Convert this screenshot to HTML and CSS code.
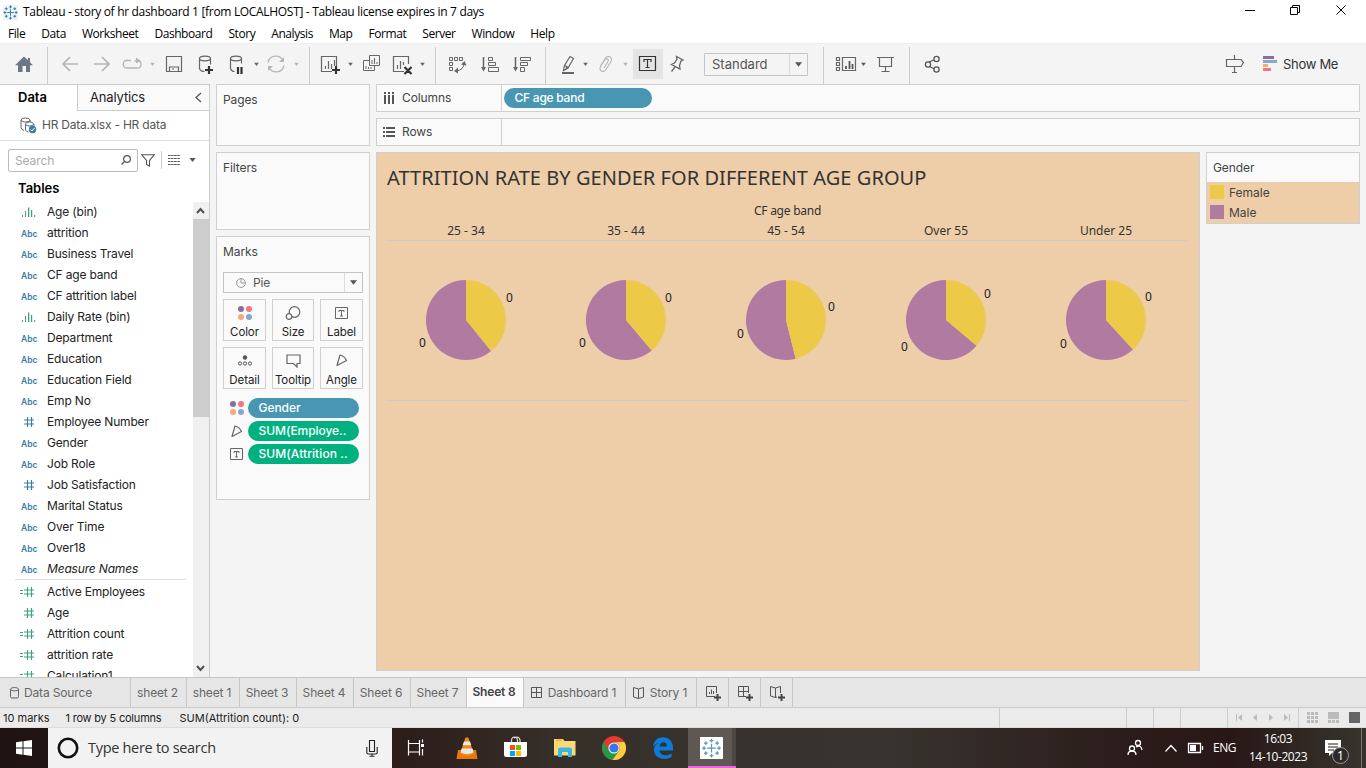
FILE: index.html
```html
<!DOCTYPE html>
<html lang="en">
<head>
<meta charset="utf-8">
<title>Tableau - story of hr dashboard 1</title>
<link rel="stylesheet" href="styles.css">
</head>
<body>
<svg class="defs" width="0" height="0" aria-hidden="true">
  <defs>
    <symbol id="abc" viewBox="0 0 20 14"><text x="1" y="11" class="abc-text">Abc</text></symbol>
    <symbol id="hash" viewBox="0 0 20 14"><path d="M7.5 2v10M11.5 2v10M4 5h10M4 9h10" fill="none" stroke="currentColor" stroke-width="1.2"/></symbol>
    <symbol id="calc" viewBox="0 0 20 14"><path d="M7.5 2v10M11.5 2v10M4 5h10M4 9h10M0 5.5h3M0 8.5h3" fill="none" stroke="currentColor" stroke-width="1.1"/></symbol>
    <symbol id="bin" viewBox="0 0 20 14"><path d="M2 10h1v2H2zM5 6h1v6H5zM8 2.500h1.300v9.500H8zM11 5h1.200v7H11zM14.200 10h1v2h-1z" fill="currentColor"/></symbol>
    <symbol id="dots" viewBox="0 0 14 14"><circle cx="3" cy="3" r="3" fill="#8a6f9b"/><circle cx="11" cy="3" r="3" fill="#f77381"/><circle cx="3" cy="11" r="3" fill="#f5a97f"/><circle cx="11" cy="11" r="3" fill="#86a7cf"/></symbol>
    <symbol id="tbox" viewBox="0 0 14 12"><path d="M.5.5h12v11H.5zM4 5V3.500h5V5M6.500 3.500v5.500M5 9h3" fill="none" stroke="#666"/></symbol>
    <symbol id="angle" viewBox="0 0 12 12"><path d="M4 1L1 11.500L10.500 6.500Q8.500 2 4 1z" fill="none" stroke="#666" stroke-width="1.200" stroke-linejoin="round"/></symbol>
    <symbol id="caret" viewBox="0 0 6 4"><path d="M0 0h6L3 4z" fill="currentColor"/></symbol>
    <symbol id="spark" viewBox="0 0 16 16"><path d="M8 4.500v7M4.500 8h7M8 .5v3M6.500 2h3M8 12.500v3M6.500 14h3M.5 8h3M2 6.500v3M12.500 8h3M14 6.500v3M3.500 2.500v3M2 4h3M12.500 2.500v3M11 4h3M3.500 10.500v3M2 12h3M12.500 10.500v3M11 12h3" fill="none" stroke="currentColor"/></symbol>
  </defs>
</svg>

<header class="titlebar">
  <svg class="app-icon" width="15" height="15"><rect width="15" height="15" fill="#eef2f6"/><use href="#spark" width="15" height="15"/></svg>
  <span class="title-text">Tableau - story of hr dashboard 1 [from LOCALHOST] - Tableau license expires in 7 days</span>
  <svg class="window-controls" width="110" height="20" viewBox="1240 0 110 20"><path d="M1245 10.500h10M1290.500 7.500h7v7h-7zM1292.500 7V5.500h7v7H1298M1336.500 5.500l9 9M1345.500 5.500l-9 9" fill="none" stroke="#000"/></svg>
</header>

<nav class="menu">
  <span>File</span><span>Data</span><span>Worksheet</span><span>Dashboard</span><span>Story</span><span>Analysis</span><span>Map</span><span>Format</span><span>Server</span><span>Window</span><span>Help</span>
</nav>

<div class="toolbar">
  <svg class="tools" width="47" height="41" viewBox="0 43 47 41"><path d="M24 56.500l4 3.800V58h2v4.200l3 3h-3V72h-4v-6h-3.500v6H18v-6.800h-3z" fill="#6b7785"/></svg>
  <svg class="tools group" width="262" height="41" viewBox="47 43 262 41">
    <g fill="none" stroke="#b5b5b5" stroke-width="1.700">
      <path d="M78 64H63M70 57l-7 7 7 7M94 64h15M102 57l7 7-7 7"/>
      <path d="M131 60.500h-4.500a3 3.500 0 0 0 0 7.500h11a3 3.500 0 0 0 1-7h-4" stroke-width="1.300"/>
      <path d="M268 62.500a8 8 0 0 1 15-2M284 65.500a8 8 0 0 1-15 2" stroke-width="1.300"/>
    </g>
    <path d="M136 57.500l4.500 3-4.500 3zM284 57v5h-5zM268 71v-5h5z" fill="#b5b5b5"/>
    <g fill="none" stroke="#666" stroke-width="1.200">
      <path d="M166.500 56.500h15v15h-15zM169.500 71v-4h9v4M172 69h2"/>
      <path d="M199.500 58.500v10q1 3 5 3M210.500 58.500v6"/><ellipse cx="205" cy="58.500" rx="5.500" ry="2.300"/>
      <path d="M230.500 58.500v10q1 3 4 3M241.500 58.500v5"/><ellipse cx="236" cy="58.500" rx="5.500" ry="2.300"/>
    </g>
    <path d="M209 66v8M205 70h8M238 67v7M241.500 67v7" stroke="#333" stroke-width="2.200"/>
    <use href="#caret" x="150" y="62.500" width="5" height="3.500" color="#b5b5b5"/><use href="#caret" x="254" y="62.500" width="5" height="3.500" color="#666"/><use href="#caret" x="294" y="62.500" width="5" height="3.500" color="#b5b5b5"/>
  </svg>
  <svg class="tools group" width="126" height="41" viewBox="309 43 126 41">
    <g fill="none" stroke="#666" stroke-width="1.200">
      <path d="M332 71.500h-10.500v-15h15V66M325.500 69v-3M328.500 69v-8M331.500 69v-5M334.500 66v-6"/>
      <path d="M369.500 55.500h10v10h-10zM369 60.500h-5.500v10h11V66M372 64v-4M374.500 64v-6M377 64v-2M366 69v-3M368.500 69v-2M371 69v-2" stroke-width="1"/>
      <path d="M404 71.500h-10.500v-15h15V64M397.500 69v-4M400.500 69v-8M403.500 65v-3"/>
    </g>
    <path d="M336 66v8M332 70h8M404.500 67l7 7M411.500 67l-7 7" stroke="#333" stroke-width="2.200"/>
    <use href="#caret" x="348" y="62.500" width="5" height="3.500" color="#666"/><use href="#caret" x="420" y="62.500" width="5" height="3.500" color="#666"/>
  </svg>
  <svg class="tools group" width="110" height="41" viewBox="435 43 110 41">
    <g fill="none" stroke="#666" stroke-width="1">
      <path d="M449.500 57.500h3v3h-3zM454.500 57.500h3v3h-3zM459.500 57.500h3v3h-3zM449.500 62.500h3v3h-3zM449.500 67.500h3v3h-3zM464 63q0 7-8 8"/>
      <path d="M488.500 57.500h4v3h-4zM488.500 62.500h7v3h-7zM488.500 67.500h10v4h-10z"/>
      <path d="M520.500 57.500h10v3h-10zM520.500 62.500h7v3h-7zM520.500 67.500h4v4h-4z"/>
      <path d="M483.500 57v11M515.500 57v11" stroke-width="1.500"/>
    </g>
    <path d="M461 64.500l3.500-3.500 2 4.500zM458 67.500v6l-4-2.500zM481 67h5l-2.500 4.500zM513 67h5l-2.500 4.500z" fill="#666"/>
  </svg>
  <svg class="tools group" width="151" height="41" viewBox="545 43 151 41">
    <path d="M562 73h12" stroke="#666" stroke-width="2"/>
    <path d="M563.500 70.500l1-5 5.500-9 3.500 2-5.500 9.500-4.500 2.500zM564.500 65.500l4 2M566 69l1-3" fill="none" stroke="#666" stroke-width="1.200"/>
    <path d="M600.500 66l5-8q2-2.500 4.500-1t1 4.500l-5 8q-2 3-4.500 1.500t-1-4.500l4.500-7q1-1.500 2.500-.5t.5 2.500l-4 6.500" fill="none" stroke="#b5b5b5" stroke-width="1.100"/>
    <rect x="633" y="49" width="30" height="30" fill="#e4e4e4"/>
    <path d="M639.500 56.500h16v14h-16zM644 62v-2.500h7V62M647.500 59.500v8M645.500 67.500h4" fill="none" stroke="#333" stroke-width="1.200"/>
    <path d="M676.500 56.500l6.500 3.500-2 1-1.500 4.500.5 3.500-8.500-4.500 3-1.500 2.500-4zM675 67l-3.500 4.500" fill="none" stroke="#666" stroke-width="1.300"/>
    <use href="#caret" x="583" y="62.500" width="5" height="3.500" color="#666"/><use href="#caret" x="623" y="62.500" width="5" height="3.500" color="#b5b5b5"/>
  </svg>
  <div class="fit-select"><span>Standard</span><i><svg width="7" height="5"><use href="#caret" width="7" height="5"/></svg></i></div>
  <svg class="tools group after-select" width="86" height="41" viewBox="823 43 86 41">
    <g fill="none" stroke="#666" stroke-width="1.200"><path d="M836.500 57.500h3v3h-3zM836.500 62.500h3v3h-3zM836.500 67.500h3v3h-3zM842.500 57.500h13v13h-13zM877 57.500h17M879.500 58v8.500h12V58M885.500 66.500v5M881.500 71.500h8"/></g>
    <path d="M846 69v-3M849.500 69v-8M852.500 69v-5" stroke="#555" stroke-width="1.800"/>
    <use href="#caret" x="861" y="62.500" width="5" height="3.500" color="#555"/>
  </svg>
  <svg class="tools group" width="60" height="41" viewBox="909 43 60 41"><path d="M927 63l9-4M927 65.500l9 4" stroke="#555" stroke-width="1.200"/><g fill="#f4f4f4" stroke="#555" stroke-width="1.300"><circle cx="928" cy="64.500" r="2.600"/><circle cx="936.500" cy="59" r="2.600"/><circle cx="936.500" cy="69.500" r="2.600"/></g></svg>
  <svg class="tools guide" width="56" height="41" viewBox="1224 43 56 41"><path d="M1226.500 59.500h14.500l2.500 3-2.500 4h-14.500zM1234.500 55v4M1234.500 66.500v5.500M1232 72.500h5" fill="none" stroke="#666" stroke-width="1.200"/><path d="M1263 56h11v3h-11z" fill="#8a6f9b"/><path d="M1263 60h14v3h-14z" fill="#86a7cf"/><path d="M1263 64h5v3h-5z" fill="#f5a97f"/><path d="M1263 68h8v3h-8z" fill="#f77381"/></svg>
  <span class="show-me">Show Me</span>
</div>

<main class="workspace">
  <aside class="data-pane">
    <div class="pane-tabs"><b>Data</b><span>Analytics</span><svg width="7" height="11"><path d="M6 1L1 5.500L6 10" fill="none" stroke="#555" stroke-width="1.300"/></svg></div>
    <div class="source">
      <svg width="17" height="17" viewBox="0 0 17 17"><g fill="none" stroke="#666"><path d="M1 3v8q1 2 3 2.500"/><ellipse cx="5.500" cy="3" rx="4.500" ry="2"/><path d="M10 3v2M5.500 7v6q1 2 3 2M14 7v3"/><ellipse cx="9.500" cy="7" rx="4" ry="2"/></g><circle cx="12.500" cy="12.500" r="3.700" fill="#3b7ea1"/><path d="M10.500 12.500l1.500 1.500 2.500-3" fill="none" stroke="#fff"/></svg>
      <span>HR Data.xlsx - HR data</span>
    </div>
    <div class="finder">
      <div class="search"><span>Search</span><svg width="10" height="10"><circle cx="6" cy="4" r="3.400" fill="none" stroke="#555" stroke-width="1.200"/><path d="M3.500 6.500L.5 9.500" stroke="#555" stroke-width="1.300"/></svg></div>
      <svg class="filter" width="14" height="13"><path d="M.8.8h12.400L8.500 6.500V12l-3-1.500v-4z" fill="none" stroke="#555" stroke-width="1.100"/></svg>
      <svg class="view" width="12" height="10"><path d="M0 .5h12M0 3.500h12M0 6.500h12M0 9.500h12" stroke="#555" stroke-dasharray="2.500 .6"/></svg>
      <svg class="view-caret" width="7" height="4"><use href="#caret" width="7" height="4"/></svg>
    </div>
    <h2 class="tables-title">Tables</h2>
    <div class="field-area">
      <ul class="fields">
        <li class="mea"><svg><use href="#bin"/></svg>Age (bin)</li>
        <li><svg><use href="#abc"/></svg>attrition</li>
        <li><svg><use href="#abc"/></svg>Business Travel</li>
        <li><svg><use href="#abc"/></svg>CF age band</li>
        <li><svg><use href="#abc"/></svg>CF attrition label</li>
        <li class="mea"><svg><use href="#bin"/></svg>Daily Rate (bin)</li>
        <li><svg><use href="#abc"/></svg>Department</li>
        <li><svg><use href="#abc"/></svg>Education</li>
        <li><svg><use href="#abc"/></svg>Education Field</li>
        <li><svg><use href="#abc"/></svg>Emp No</li>
        <li><svg><use href="#hash"/></svg>Employee Number</li>
        <li><svg><use href="#abc"/></svg>Gender</li>
        <li><svg><use href="#abc"/></svg>Job Role</li>
        <li><svg><use href="#hash"/></svg>Job Satisfaction</li>
        <li><svg><use href="#abc"/></svg>Marital Status</li>
        <li><svg><use href="#abc"/></svg>Over Time</li>
        <li><svg><use href="#abc"/></svg>Over18</li>
        <li><svg><use href="#abc"/></svg><em>Measure Names</em></li>
        <li class="rule"></li>
        <li class="mea"><svg><use href="#calc"/></svg>Active Employees</li>
        <li class="mea"><svg><use href="#hash"/></svg>Age</li>
        <li class="mea"><svg><use href="#calc"/></svg>Attrition count</li>
        <li class="mea"><svg><use href="#calc"/></svg>attrition rate</li>
        <li class="mea"><svg><use href="#calc"/></svg>Calculation1</li>
      </ul>
      <div class="scrollbar">
        <svg width="15" height="17"><path d="M4 11l3.500-4L11 11" fill="none" stroke="#505050" stroke-width="2"/></svg>
        <div class="thumb"></div>
        <svg class="down" width="15" height="17"><path d="M4 6l3.500 4L11 6" fill="none" stroke="#505050" stroke-width="2"/></svg>
      </div>
    </div>
  </aside>

  <section class="cards">
    <div class="card pages">Pages</div>
    <div class="card filters">Filters</div>
    <div class="card marks">
      <div class="marks-title">Marks</div>
      <div class="mark-type"><svg width="10" height="10"><path d="M5 .6A4.400 4.400 0 1 0 9.400 5A4.400 4.400 0 0 0 5 .6V5H9" fill="none" stroke="#999"/></svg><span>Pie</span><i><svg width="7" height="5"><use href="#caret" width="7" height="5"/></svg></i></div>
      <div class="mark-grid">
        <div><svg width="14" height="14"><use href="#dots"/></svg>Color</div>
        <div><svg width="16" height="14"><circle cx="9.500" cy="6" r="5.300" fill="none" stroke="#666" stroke-width="1.200"/><circle cx="4" cy="10.500" r="2.800" fill="#fafafa" stroke="#666" stroke-width="1.200"/></svg>Size</div>
        <div><svg class="low" width="14" height="12"><use href="#tbox"/></svg>Label</div>
        <div><svg class="low" width="16" height="12"><circle cx="8" cy="2.500" r="2.200" fill="#555"/><g fill="none" stroke="#555"><circle cx="3" cy="8.500" r="1.600"/><circle cx="8" cy="8.500" r="1.600"/><circle cx="13" cy="8.500" r="1.600"/></g></svg>Detail</div>
        <div><svg width="15" height="14"><path d="M1 1h13v8.500h-3V13L7.500 9.500H1z" fill="none" stroke="#666" stroke-width="1.200"/></svg>Tooltip</div>
        <div><svg width="12" height="12"><use href="#angle"/></svg>Angle</div>
      </div>
      <div class="pills">
        <div><svg width="14" height="14"><use href="#dots"/></svg><span class="pill blue">Gender</span></div>
        <div><svg width="14" height="12"><use href="#angle"/></svg><span class="pill green">SUM(Employe..</span></div>
        <div><svg width="14" height="12"><use href="#tbox"/></svg><span class="pill green wide">SUM(Attrition ..</span></div>
      </div>
    </div>
  </section>

  <section class="view-area">
    <div class="shelf"><div class="shelf-name"><svg width="12" height="12"><path d="M2 0v2M6 0v2M10 0v2M2 3v9M6 3v9M10 3v9" stroke="#555" stroke-width="2"/></svg>Columns</div><span class="pill blue">CF age band</span></div>
    <div class="shelf"><div class="shelf-name"><svg width="12" height="12"><path d="M0 2h2M0 6h2M0 10h2M3 2h9M3 6h9M3 10h9" stroke="#555" stroke-width="2"/></svg>Rows</div></div>
    <div class="view-row">
      <div class="sheet">
        <h1>ATTRITION RATE BY GENDER FOR DIFFERENT AGE GROUP</h1>
        <div class="axis-title">CF age band</div>
        <div class="headers"><span>25 - 34</span><span>35 - 44</span><span>45 - 54</span><span>Over 55</span><span>Under 25</span></div>
        <svg class="pies" width="801" height="159" viewBox="387 241 801 159">
          <g fill="#b07aa1"><path d="M466 280A40 40 0 1 0 491.100 351.100L466 320z"/><path d="M626 280A40 40 0 1 0 651.700 350.600L626 320z"/><path d="M786 280A40 40 0 1 0 795.700 358.800L786 320z"/><path d="M946 280A40 40 0 1 0 976.600 345.700L946 320z"/><path d="M1106 280A40 40 0 1 0 1133 349.500L1106 320z"/></g>
          <g fill="#edc948"><path d="M466 320V280A40 40 0 0 1 491.100 351.100z"/><path d="M626 320V280A40 40 0 0 1 651.700 350.600z"/><path d="M786 320V280A40 40 0 0 1 795.700 358.800z"/><path d="M946 320V280A40 40 0 0 1 976.600 345.700z"/><path d="M1106 320V280A40 40 0 0 1 1133 349.500z"/></g>
          <g class="mark-labels"><text x="509.500" y="302">0</text><text x="422.500" y="347">0</text><text x="668.500" y="302">0</text><text x="582.500" y="347">0</text><text x="831.500" y="311">0</text><text x="740.500" y="338">0</text><text x="987.500" y="298">0</text><text x="904.500" y="351">0</text><text x="1148.500" y="301">0</text><text x="1063.500" y="348">0</text></g>
        </svg>
      </div>
      <div class="legend">
        <div class="legend-title">Gender</div>
        <div class="legend-items"><div><i class="female"></i>Female</div><div><i class="male"></i>Male</div></div>
      </div>
    </div>
  </section>
</main>

<div class="sheet-tabs">
  <div class="tab t-source"><svg width="9" height="12"><path d="M.5 2v7.500q0 1.500 1.500 1.500h5q1.500 0 1.500-1.500V2" fill="none" stroke="#666"/><ellipse cx="4.500" cy="2.200" rx="4" ry="1.700" fill="none" stroke="#666"/></svg><span>Data Source</span></div>
  <div class="tab t-2">sheet 2</div><div class="tab t-1">sheet 1</div><div class="tab t-3">Sheet 3</div><div class="tab t-4">Sheet 4</div><div class="tab t-4">Sheet 6</div><div class="tab t-7">Sheet 7</div><div class="tab t-4 active">Sheet 8</div>
  <div class="tab t-dash"><svg width="12" height="11"><path d="M.5.5h10v10H.5zM5.500.5v10M.5 5.500h10" fill="none" stroke="#555"/></svg><span>Dashboard 1</span></div>
  <div class="tab t-story"><svg width="12" height="12"><path d="M.5.500L5.500 2l5-1.500V10l-5 1.500L.5 10zM5.500 2v9.500" fill="none" stroke="#555"/></svg><span>Story 1</span></div>
  <div class="tab t-new"><svg width="16" height="15"><path d="M9 10.500H.5V.5h10V7M3.500 8V6M5.500 8V3.500M7.500 8V5" fill="none" stroke="#555"/><path d="M11.500 8v7M8 11.500h7" stroke="#444" stroke-width="2"/></svg></div>
  <div class="tab t-new"><svg width="16" height="15"><path d="M8 10.500H.5V.5h10V7M5.500.5v10M.5 5.500h10" fill="none" stroke="#555"/><path d="M11.500 8v7M8 11.500h7" stroke="#444" stroke-width="2"/></svg></div>
  <div class="tab t-new"><svg width="16" height="15"><path d="M7 11L5.500 11.500.5 10V.500L5.500 2l5-1.500V7M5.500 2v9.500" fill="none" stroke="#555"/><path d="M11.500 8v7M8 11.500h7" stroke="#444" stroke-width="2"/></svg></div>
</div>

<div class="status">
  <span class="s1">10 marks</span><span class="s2">1 row by 5 columns</span><span class="s3">SUM(Attrition count): 0</span>
  <svg class="status-tools" width="367" height="20" viewBox="999 708 367 20">
    <path d="M999.500 708v20M1126.500 708v20M1153.500 708v20M1180.500 708v20M1227.500 708v20M1298.500 708v20" stroke="#ccc"/>
    <g fill="#bbb"><path d="M1236 714h1v7h-1zM1242 714v7l-4-3.500zM1257 714v7l-4-3.500zM1269 714v7l4-3.500zM1284 714v7l4-3.500zM1289 714h1v7h-1z"/><path d="M1307 712h3v3h-3zM1311 712h3v3h-3zM1315 712h3v3h-3zM1307 716h3v3h-3zM1311 716h3v3h-3zM1315 716h3v3h-3zM1307 720h3v3h-3zM1311 720h3v3h-3zM1315 720h3v3h-3zM1328 712h11v7h-11zM1328 720h3v3h-3zM1332 720h3v3h-3zM1336 720h3v3h-3z"/></g>
    <path d="M1349 712h11v11h-11z" fill="#666"/>
  </svg>
</div>

<footer class="taskbar">
  <div class="start"><svg width="16" height="16"><path d="M0 2.200L6.500 1.300V7.500H0zM7.500 1.200L16 0V7.500H7.500zM0 8.500H6.500V14.700L0 13.800zM7.500 8.500H16V16L7.500 14.800z" fill="#fff"/></svg></div>
  <div class="task-search"><svg width="22" height="22"><circle cx="11" cy="11" r="9.200" fill="none" stroke="#111" stroke-width="2.600"/></svg><span>Type here to search</span><svg class="mic" width="12" height="17"><path d="M3.500.5h5v11h-5zM.8 7v5.500q0 1.500 1.500 1.500h7.400q1.500 0 1.500-1.500V7M6 14v2.500M3.500 16.300h5" fill="none" stroke="#222" stroke-width="1.100"/></svg></div>
  <svg class="apps" width="344" height="40" viewBox="392 728 344 40">
    <path d="M408.500 740v3.500M419.500 740v3.500M408.500 743.500h11v8.500h-11zM408.500 755.500v-3.500M419.500 755.500v-3.500M422.500 739.500v3M422.500 749v6.500" fill="none" stroke="#fff" stroke-width="1.200"/><path d="M421 744h3v3h-3z" fill="#fff"/>
    <path d="M458 750h18l1.500 9h-21z" fill="#e97708"/><path d="M465.500 737.500h2.800L474 754q-7 4-14 0z" fill="#f58713"/><path d="M464 741.500h6l1.300 3.700h-8.700zM461.600 748.500h11l1 4q-6.500 3-13 0z" fill="#e8e8e8"/>
    <path d="M504 742h23v12.500q0 2.500-2.500 2.500h-18q-2.500 0-2.500-2.500z" fill="#fff"/><path d="M511.500 742v-1q0-4 3-4t3 4v1M514 738q5-2.500 6 2v2" fill="none" stroke="#ddd" stroke-width="1.200"/><path d="M510 745h5v5h-5z" fill="#f25022"/><path d="M516 745h5v5h-5z" fill="#7fba00"/><path d="M510 751h5v5h-5z" fill="#00a4ef"/><path d="M516 751h5v5h-5z" fill="#ffb900"/>
    <path d="M554 739h9l1.500 2H575.500v14.500H554z" fill="#fbd974"/><path d="M556 740.200h6" stroke="#e8a31c"/><path d="M558 757v-7q0-2.500 2.500-2.500h9q2.500 0 2.500 2.500v7h-4v-5h-6v5z" fill="#3bb6e8"/>
    <circle cx="614" cy="748" r="12" fill="#e33b2e"/><path d="M603.600 742A12 12 0 0 0 612.500 759.900L619.200 751H609z" fill="#279847"/><path d="M624.400 742A12 12 0 0 1 612.500 759.900L619.200 751A6 6 0 0 0 614 742z" fill="#fdd037"/><circle cx="614" cy="748" r="5.600" fill="#fff"/><circle cx="614" cy="748" r="4.600" fill="#3479e8"/>
    <path d="M653 747C654 734 673 734 673 748V750.500H659.500C660 756 667 756.500 671.500 753.500V757C664 761 654 758.500 654 750C654 745.500 657 743 660 742.500Q655.500 743 653 747zM659.500 746.500H667C667 740.500 660 741.500 659.500 746.500z" fill="#0c7cda" fill-rule="evenodd"/>
    <path d="M688 728h44v38h-44z" fill="#5d5854"/><path d="M732 728h4v38h-4z" fill="#4b4642"/><path d="M688 766h48v2h-48z" fill="#ee62dc"/><path d="M700 737h23v22h-23z" fill="#fff"/><use href="#spark" x="701.500" y="738" width="20" height="20" color="#5b98ba"/>
  </svg>
  <svg class="tray" width="90" height="40" viewBox="1120 728 90 40"><g fill="none" stroke="#fff" stroke-width="1.300"><circle cx="1132" cy="748.500" r="2.500"/><path d="M1128 755q0-4 4-4t4 4"/><circle cx="1138" cy="743" r="2.500"/><path d="M1136 747q5-3 6 3M1165.500 751.500l5.500-6 5.500 6M1188.500 743.500h12v9h-12zM1202.500 746v4"/></g><path d="M1190 745h6v6h-6z" fill="#fff"/></svg>
  <span class="lang">ENG</span>
  <div class="clock"><span>16:03</span><span class="date">14-10-2023</span></div>
  <svg class="notes" width="40" height="40" viewBox="1322 728 40 40"><path d="M1325 740h16v13h-9l-3 3v-3h-4z" fill="#fff"/><path d="M1328 744h10M1328 747h10M1328 750h6" stroke="#241c1a"/><circle cx="1340.500" cy="755.500" r="8" fill="#2c2b2a" stroke="#999"/><text x="1340.500" y="760">1</text><path d="M1361.500 728v40" stroke="#77736f"/></svg>
</footer>
</body>
</html>
```
FILE: styles.css
```css
* { box-sizing: border-box; }
body { margin: 0; width: 1366px; height: 768px; overflow: hidden; display: flex; flex-direction: column; background: #f4f4f4; color: #333; font: 12px/16px Inter, "Open Sans", sans-serif; }
svg { display: block; flex: none; }
.defs { display: none; }
h1, h2, ul { margin: 0; padding: 0; list-style: none; }
span { white-space: nowrap; }

.titlebar { flex: none; height: 24px; background: #fff; display: flex; align-items: center; padding-left: 3px; color: #000; font-family: "Open Sans", sans-serif; }
.app-icon { color: #2d7aa5; }
.title-text { margin-left: 5px; font-size: 12px; letter-spacing: -.315px; }
.window-controls { margin-left: auto; margin-right: 16px; align-self: flex-start; }

.menu { flex: none; height: 19px; background: #fff; display: flex; gap: 16px; padding-left: 8px; line-height: 19px; color: #000; font-family: "Open Sans", sans-serif; letter-spacing: -.43px; }

.toolbar { flex: none; height: 41px; display: flex; align-items: center; border-top: 1px solid #eee; }
.tools { margin-top: -1px; }
.group { background: linear-gradient(#ccc, #ccc) 0 4px / 1px 37px no-repeat; }
.fit-select { margin-left: 8px; width: 104px; height: 23px; border: 1px solid #c4c4c4; border-radius: 1px; display: flex; align-items: center; justify-content: space-between; padding-left: 7px; color: #555; font-size: 13px; }
.fit-select i, .mark-type i { width: 18px; align-self: stretch; border-left: 1px solid #ddd; display: flex; align-items: center; justify-content: center; color: #555; }
.after-select { margin-left: 15px; }
.guide { margin-left: auto; }
.show-me { margin-left: 3px; width: 83px; font-size: 13px; letter-spacing: -.3px; }

.workspace { flex: none; height: 593px; display: flex; }
.data-pane { width: 210px; background: #fff; border-top: 1px solid #ccc; border-right: 1px solid #ccc; display: flex; flex-direction: column; overflow: hidden; }
.pane-tabs { flex: none; height: 26px; display: flex; font-size: 13px; line-height: 25px; color: #222; }
.pane-tabs b { width: 77px; padding-left: 18px; color: #000; font-weight: 600; }
.pane-tabs span { flex: 1; padding-left: 12px; border-left: 1px solid #ccc; border-bottom: 1px solid #ccc; background: #fafafa; letter-spacing: -.15px; }
.pane-tabs svg { margin: 7px 7px 0 -14px; }
.source { flex: none; height: 30px; border-bottom: 1px solid #ddd; display: flex; align-items: center; gap: 5px; padding-left: 20px; color: #555; letter-spacing: -.22px; }
.source span { margin-top: -2px; }
.finder { flex: none; height: 38px; display: flex; align-items: center; padding-left: 8px; color: #555; }
.search { width: 130px; height: 23px; border: 1px solid #bbb; border-radius: 2px; display: flex; align-items: center; justify-content: space-between; padding: 0 6px; color: #aaa; letter-spacing: -.1px; }
.search span { margin-top: 2px; }
.filter { margin-left: 3px; }
.view { box-sizing: content-box; margin-left: 6px; padding: 4px 0 4px 6px; border-left: 1px solid #ccc; }
.view-caret { margin-left: 9px; }
.tables-title { flex: none; height: 22px; padding-left: 18px; font-size: 13px; font-weight: 600; line-height: 19px; color: #000; }
.field-area { flex: 1; min-height: 0; display: flex; justify-content: space-between; overflow: hidden; }
.fields { width: 190px; line-height: 21px; color: #222; letter-spacing: -.17px; }
.fields li { height: 21px; display: flex; align-items: center; padding-left: 20px; color: #222; }
.fields svg { width: 20px; height: 14px; margin-right: 7px; color: #3b7ea1; }
.fields .mea svg { color: #3fa17f; }
.fields .rule { height: 1px; margin: 0 4px 1px 15px; background: #ddd; }
.abc-text { font: 600 8.500px Inter, sans-serif; letter-spacing: 0; fill: currentColor; }
.scrollbar { margin-top: 1px; width: 16px; background: #f0f0f0; display: flex; flex-direction: column; }
.thumb { height: 198px; background: #cdcdcd; }
.down { margin-top: auto; }

.cards { margin-left: 6px; width: 154px; display: flex; flex-direction: column; gap: 6px; color: #444; }
.card { border: 1px solid #d0d0d0; background: #fafafa; padding: 7px 6px 0; letter-spacing: -.1px; }
.pages { height: 62px; }
.filters { height: 78px; }
.marks { height: 264px; padding: 0 6px; }
.marks-title { height: 35px; padding-top: 7px; }
.mark-type { height: 21px; border: 1px solid #c4c4c4; display: flex; align-items: center; padding-left: 12px; color: #555; }
.mark-type span { flex: 1; margin-left: 7px; }
.mark-grid { margin-top: 6px; display: grid; grid-template-columns: 43px 42px 43px; gap: 6px; }
.mark-grid > div { height: 42px; border: 1px solid #d0d0d0; display: flex; flex-direction: column; align-items: center; justify-content: space-between; padding: 6px 0 0; font-size: 11.500px; color: #222; }
.low { margin-top: 1px; }
.pills { margin-top: 9px; display: flex; flex-direction: column; gap: 3px; }
.pills > div { display: flex; align-items: center; gap: 4px; padding-left: 7px; }
.pill { width: 111px; height: 20px; border-radius: 10px; padding-left: 10.500px; line-height: 20px; color: #fff; font-weight: 500; font-size: 12px; letter-spacing: -.05px; }
.wide { letter-spacing: .08px; }
.blue { background: #4996b2; }
.green { background: #00b180; }

.view-area { margin-left: 6px; width: 984px; display: flex; flex-direction: column; gap: 6px; color: #444; }
.shelf { flex: none; height: 28px; border: 1px solid #d0d0d0; background: #fafafa; display: flex; align-items: center; }
.shelf-name { width: 125px; height: 26px; border-right: 1px solid #d0d0d0; display: flex; align-items: center; gap: 7px; padding-left: 6px; letter-spacing: -.1px; }
.shelf .pill { width: 148px; margin-left: 2px; letter-spacing: -.25px; }
.view-row { display: flex; gap: 6px; align-items: flex-start; }
.sheet { width: 824px; height: 519px; border: 1px solid #d0d0d0; background: #edcea8; padding: 0 11px 0 10px; color: #333; font-family: "Noto Sans", sans-serif; }
.sheet h1 { height: 50px; padding-top: 11px; font-size: 20px; line-height: 28px; font-weight: 400; letter-spacing: .055px; white-space: nowrap; }
.axis-title { height: 18px; line-height: 16px; text-align: center; letter-spacing: -.25px; }
.headers { height: 20px; display: grid; grid-template-columns: repeat(5, 160px); margin-left: -1px; padding-left: 0; line-height: 19px; text-align: center; background: linear-gradient(#ccc, #ccc) 1px 19px / 801px 1px no-repeat; width: 802px; }
.pies { border-bottom: 1px solid #ccc; box-sizing: content-box; }
.mark-labels { font: 12px "Noto Sans", sans-serif; fill: #222; text-anchor: middle; }
.legend { width: 154px; height: 72px; border: 1px solid #d0d0d0; }
.legend-title { height: 29px; background: #fafafa; padding: 7px 6px; letter-spacing: -.1px; }
.legend-items { height: 41px; background: #edcea8; }
.legend-items div { height: 20px; display: flex; align-items: center; gap: 5px; padding: 1px 0 0 3px; }
.legend-items i { width: 14px; height: 14px; margin-top: -1px; }
.female { background: #edc948; }
.male { background: #b07aa1; }

.sheet-tabs { flex: none; height: 31px; display: flex; background: #e6e6e6; border-top: 1px solid #c6c6c6; border-bottom: 1px solid #ccc; color: #666; letter-spacing: -.15px; }
.tab { border-right: 1px solid #c6c6c6; display: flex; align-items: center; justify-content: center; padding-right: 2px; }
.tab span { margin-left: 5px; }
.t-source { width: 131px; justify-content: flex-start; padding-left: 10px; }
.t-2 { width: 56px; }
.t-1 { width: 53px; }
.t-3, .t-4 { width: 57px; }
.t-7 { width: 56px; }
.t-dash { width: 102px; }
.t-story { width: 71px; }
.t-new { width: 32px; padding: 2px 0 0 2px; }
.active { background: #fafafa; color: #444; font-weight: 600; padding-bottom: 2px; }

.status { flex: none; height: 20px; background: #ebebeb; display: flex; align-items: center; padding-left: 3px; font-size: 11px; color: #222; border-bottom: 1px solid #ddd; }
.s2, .s3 { margin-left: 17px; }
.s2 { margin-left: 16px; letter-spacing: -.2px; }
.s3 { margin-left: 18px; }
.status-tools { margin-left: auto; }

.taskbar { flex: none; height: 40px; display: flex; align-items: center; color: #fff; font-family: "Open Sans", sans-serif; background: linear-gradient(90deg, #1f1413 0, #2d1e1b 30%, #36302b 42%, #38332e 65%, #2b1d1b 82%, #281716 90%, #322c27 97%, #37342d); }
.start { width: 48px; display: flex; justify-content: center; }
.task-search { width: 344px; height: 40px; background: #f2f2f2; color: #333; display: flex; align-items: center; gap: 9px; padding: 0 14px 0 9px; font-size: 14.500px; letter-spacing: -.3px; }
.mic { margin-left: auto; }
.apps { margin-right: auto; }
.lang { width: 30px; margin-left: 3px; font-size: 12px; letter-spacing: -.5px; }
.clock { width: 70px; margin-left: 0; margin-right: 1px; display: flex; flex-direction: column; gap: 2px; align-items: center; font-size: 12px; letter-spacing: -.45px; }
.notes { margin-left: 8px; margin-right: 4px; }
.notes text { font: 13px "Open Sans", sans-serif; fill: #fff; text-anchor: middle; }
```
